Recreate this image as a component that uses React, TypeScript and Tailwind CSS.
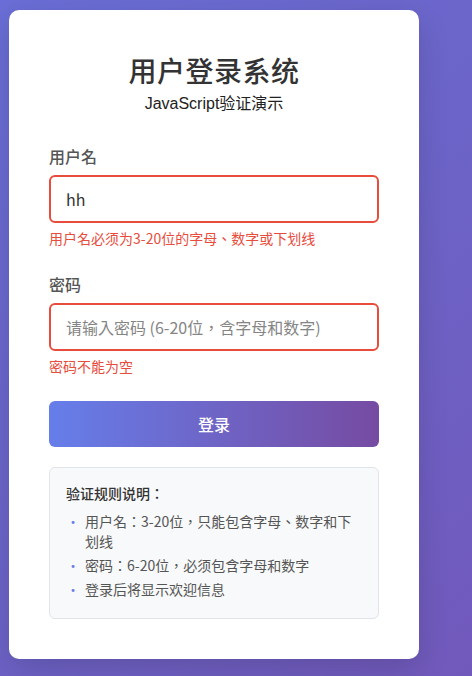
import React, { useState } from "react";

const CJK = "font-['Noto_Sans_CJK_TC',sans-serif]";

const RULES = [
  "用户名：3-20位，只能包含字母、数字和下划线",
  "密码：6-20位，必须包含字母和数字",
  "登录后将显示欢迎信息",
];

export default function App() {
  const [username, setUsername] = useState("hh");
  const [password, setPassword] = useState("");

  return (
    <div className="min-h-screen bg-[linear-gradient(135deg,#6a6ed6_0%,#6c64c8_50%,#7159bb_100%)] p-[10px] pl-[9px]">
      <div className={`w-[410px] rounded-[10px] bg-white p-10 shadow-[0_10px_30px_rgba(0,0,0,0.15)] ${CJK}`}>
        {/* Header */}
        <div className="text-center">
          <h1 className="text-[28px] font-medium leading-[40px] tracking-[0.5px] text-[#333]">用户登录系统</h1>
          <p className="mt-0.5 font-['Liberation_Sans','Noto_Sans_CJK_TC',sans-serif] text-base leading-6 text-[#222]">
            JavaScript验证演示
          </p>
        </div>

        {/* Username */}
        <div className="mt-[29px]">
          <label className="mb-2 block text-base font-medium leading-[22px] text-[#555]">用户名</label>
          <input
            value={username}
            onChange={(e) => setUsername(e.target.value)}
            className="block h-12 w-full rounded-md border-2 border-[#e74c3c] px-[15px] text-base text-[#333] outline-none"
          />
          <div className="mt-[5px] text-sm leading-5 text-[#e74c3c]">用户名必须为3-20位的字母、数字或下划线</div>
        </div>

        {/* Password */}
        <div className="mt-[25px]">
          <label className="mb-2 block text-base font-medium leading-[22px] text-[#555]">密码</label>
          <input
            type="password"
            autoFocus
            value={password}
            onChange={(e) => setPassword(e.target.value)}
            placeholder="请输入密码 (6-20位，含字母和数字)"
            className="block h-12 w-full rounded-md border-2 border-[#e74c3c] px-[15px] text-base text-[#333] caret-black outline-none placeholder:text-[#858585]"
          />
          <div className="mt-[5px] text-sm leading-5 text-[#e74c3c]">密码不能为空</div>
        </div>

        <button className="mt-[25px] flex h-[46px] w-full items-center justify-center rounded-md bg-[linear-gradient(90deg,#667eea,#764ba2)] text-base font-medium text-white">
          登录
        </button>

        {/* Rules */}
        <div className="mt-5 rounded-md border border-[#e1e4e8] bg-[#f8f9fa] px-4 pb-[19px] pt-[15px]">
          <h3 className="text-sm font-medium leading-5 text-[#333]">验证规则说明：</h3>
          <ul className="mt-2 space-y-1">
            {RULES.map((r) => (
              <li key={r} className="flex text-sm leading-5 text-[#555]">
                <span className="w-[19px] shrink-0 text-[#667eea]">•</span>
                <span>{r}</span>
              </li>
            ))}
          </ul>
        </div>
      </div>
    </div>
  );
}
